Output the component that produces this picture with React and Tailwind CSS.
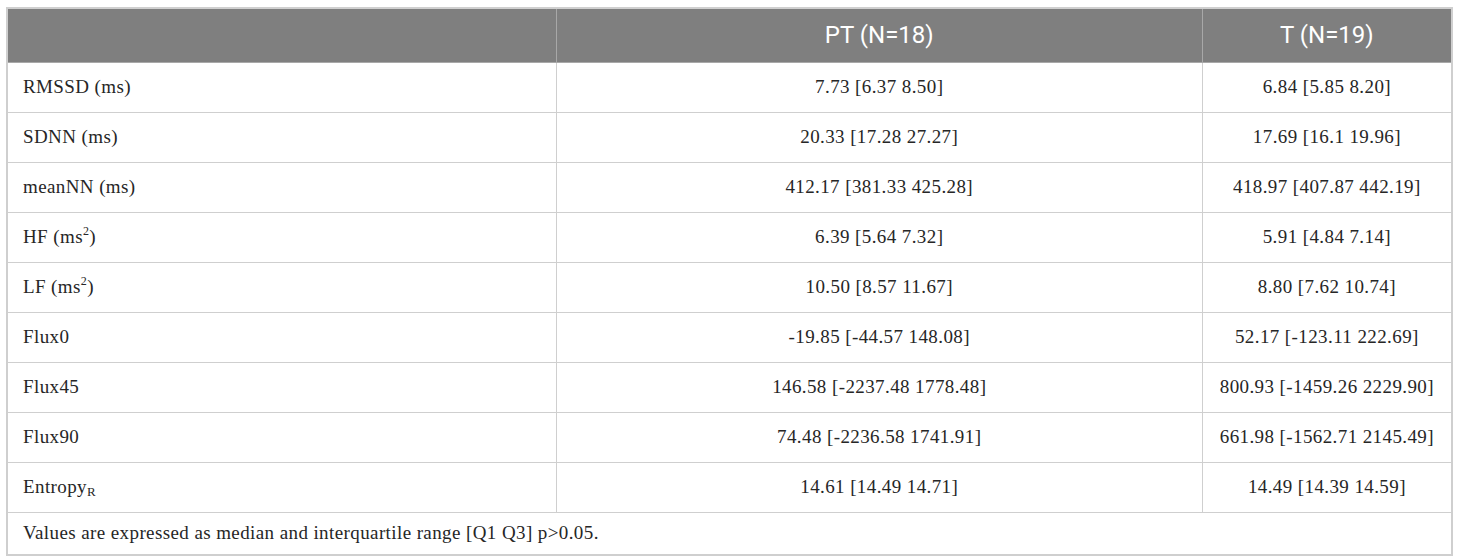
import React from "react";

const rows = [
  [<>RMSSD (ms)</>, "7.73 [6.37 8.50]", "6.84 [5.85 8.20]"],
  [<>SDNN (ms)</>, "20.33 [17.28 27.27]", "17.69 [16.1 19.96]"],
  [<>meanNN (ms)</>, "412.17 [381.33 425.28]", "418.97 [407.87 442.19]"],
  [<>HF (ms<sup className="text-[12px] relative -top-[8px]">2</sup>)</>, "6.39 [5.64 7.32]", "5.91 [4.84 7.14]"],
  [<>LF (ms<sup className="text-[12px] relative -top-[8px]">2</sup>)</>, "10.50 [8.57 11.67]", "8.80 [7.62 10.74]"],
  [<>Flux0</>, "-19.85 [-44.57 148.08]", "52.17 [-123.11 222.69]"],
  [<>Flux45</>, "146.58 [-2237.48 1778.48]", "800.93 [-1459.26 2229.90]"],
  [<>Flux90</>, "74.48 [-2236.58 1741.91]", "661.98 [-1562.71 2145.49]"],
  [<>Entropy<sub className="text-[13px] relative top-[3px] tracking-normal">R</sub></>, "14.61 [14.49 14.71]", "14.49 [14.39 14.59]"],
];

const headFont = { fontFamily: 'Roboto, "Liberation Sans", sans-serif' };

export default function App() {
  return (
    <div className="w-[1460px] h-[560px] bg-white pt-[7px] pl-[6px]">
      <table
        className="w-[1447px] border-collapse border-2 border-[#cfcfcf] text-[#262626]"
        style={{ fontFamily: '"Liberation Serif", "DejaVu Serif", serif' }}
      >
        <colgroup>
          <col className="w-[550px]" />
          <col className="w-[647px]" />
          <col className="w-[250px]" />
        </colgroup>
        <thead>
          <tr className="bg-[#7f7f7f] h-[54px]">
            <th className="border border-[#a8a8a8] p-0"></th>
            <th className="border border-[#a8a8a8] text-white font-normal text-[24px] p-0" style={headFont}>
              PT (N=18)
            </th>
            <th className="border border-[#a8a8a8] text-white font-normal text-[24px] p-0" style={headFont}>
              T (N=19)
            </th>
          </tr>
        </thead>
        <tbody className="text-[19px]">
          {rows.map((r, i) => (
            <tr key={i} className="h-[50px]">
              <td className="border border-[#cfcfcf] pl-[15px] p-0 tracking-[0.4px]">{r[0]}</td>
              <td className="border border-[#cfcfcf] text-center p-0 tracking-[0.4px]">{r[1]}</td>
              <td className="border border-[#cfcfcf] text-center p-0 tracking-[0.4px]">{r[2]}</td>
            </tr>
          ))}
          <tr className="h-[43px]">
            <td colSpan={3} className="border border-[#cfcfcf] pl-[15px] p-0 tracking-[0.4px]">
              Values are expressed as median and interquartile range [Q1 Q3] p&gt;0.05.
            </td>
          </tr>
        </tbody>
      </table>
    </div>
  );
}
